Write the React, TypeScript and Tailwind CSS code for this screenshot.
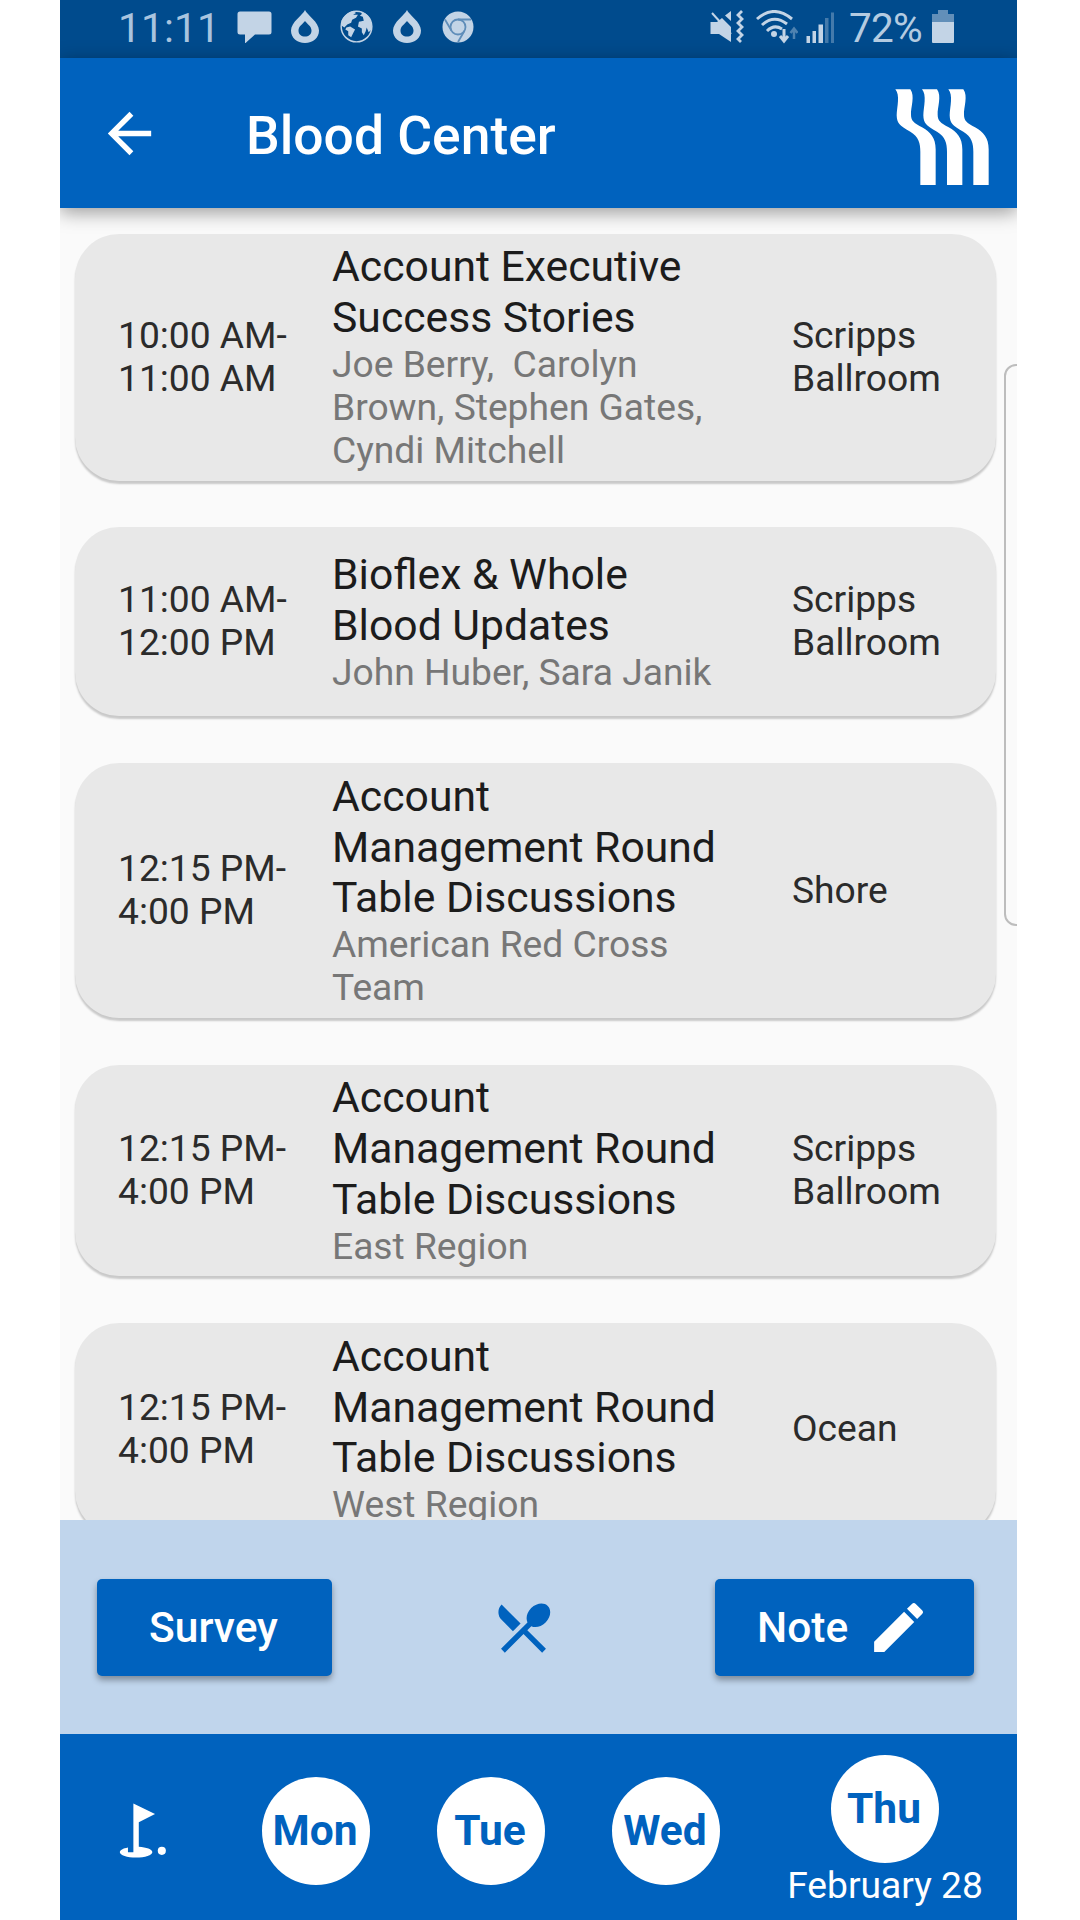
import { MdArrowBack, MdEdit, MdGolfCourse, MdLocalDining } from 'react-icons/md'

type Session = {
  time: string
  title: string
  speakers: string
  room: string
}

const sessions: Session[] = [
  {
    time: '10:00 AM-\n11:00 AM',
    title: 'Account Executive\nSuccess Stories',
    speakers: 'Joe Berry,  Carolyn\nBrown, Stephen Gates,\nCyndi Mitchell',
    room: 'Scripps\nBallroom',
  },
  {
    time: '11:00 AM-\n12:00 PM',
    title: 'Bioflex & Whole\nBlood Updates',
    speakers: 'John Huber, Sara Janik',
    room: 'Scripps\nBallroom',
  },
  {
    time: '12:15 PM-\n4:00 PM',
    title: 'Account\nManagement Round\nTable Discussions',
    speakers: 'American Red Cross\nTeam',
    room: 'Shore',
  },
  {
    time: '12:15 PM-\n4:00 PM',
    title: 'Account\nManagement Round\nTable Discussions',
    speakers: 'East Region',
    room: 'Scripps\nBallroom',
  },
  {
    time: '12:15 PM-\n4:00 PM',
    title: 'Account\nManagement Round\nTable Discussions',
    speakers: 'West Region',
    room: 'Ocean',
  },
]

function DropIcon({ className }: { className: string }) {
  return (
    <svg viewBox="0 0 28 33" className={className} fill="currentColor">
      <path
        fillRule="evenodd"
        d="M14 0C16 5 28 12 28 20.5C28 28 22 33 14 33S0 28 0 20.5C0 12 12 5 14 0ZM14 11C12 14 7.500 16 7.500 20.500C7.500 24.500 10.500 26.500 14 26.500S20.500 24.500 20.500 20.500C20.500 16 16 14 14 11Z"
      />
    </svg>
  )
}

function StatusBar() {
  return (
    <div className="flex h-[58px] shrink-0 items-start bg-[#004b8d] pt-[10px] text-[#c3d4e6]">
      <span className="ml-[58px] w-[119px] text-[41px] leading-[37px] text-[#a9c4df]">11:11</span>
      <svg viewBox="0 0 36 33" className="h-[33px] w-[36px]" fill="currentColor">
        <path d="M3 1.500H32Q34.500 1.500 34.500 4V22Q34.500 24.500 32 24.500H18L8 33.500V24.500H3Q0.500 24.500 0.500 22V4Q0.500 1.500 3 1.500Z" />
      </svg>
      <DropIcon className="ml-[18px] h-[33px] w-[28px]" />
      <svg viewBox="0 0 35 35" className="ml-[20px] h-[34px] w-[35px]" fill="currentColor">
        <circle cx="17.500" cy="17" r="15.800" fill="none" stroke="currentColor" strokeWidth="1.500" />
        <path d="M2 11Q6 3 14 1L17 3L14 5L19 5L17 8L13 10L12 13L8 15L5 18L2 16Z" />
        <path d="M7 18L11 17L16 20L14 24L12 28L9 26L9 22L6 20Z" />
        <path d="M22 1.500Q27 3 30 7L33 13V20L30 23L28 18L27 22L25 26L23 23V19L19 17L20 12L25 11L24 7L21 6L23 4Z" />
      </svg>
      <DropIcon className="ml-[19px] h-[33px] w-[28px]" />
      <svg viewBox="0 0 32 32" className="ml-[21px] mt-px h-[32px] w-[32px]">
        <circle cx="16" cy="16" r="15.500" fill="currentColor" />
        <g fill="none" stroke="#5f8db9" strokeWidth="1.800">
          <circle cx="16" cy="16" r="7.500" />
          <path d="M16 8.500H29M9.500 19.700L3 8.500M22.500 19.700L16 31" />
        </g>
      </svg>
      <svg viewBox="0 0 34 34" className="ml-[236px] h-[34px] w-[34px]" fill="currentColor">
        <path d="M0.500 12H7L12 8L21 17V32L9 24H0.500ZM15 5.500L21 1V11Z" />
        <path d="M2 3L21 24" stroke="currentColor" strokeWidth="2" />
        <path d="M32 1L28 5L32 9L28 13L32 17L28 21L32 25L28 29L31 32" fill="none" stroke="currentColor" strokeWidth="2.800" />
      </svg>
      <svg viewBox="0 0 42 34" className="ml-[12px] h-[34px] w-[42px]" fill="none" stroke="currentColor">
        <path d="M1 9Q18 -6 36 9M6 15Q18 4 31 14M11 21Q18 14 26 19" strokeWidth="3" />
        <circle cx="18" cy="24" r="3" fill="currentColor" stroke="none" />
        <path d="M28 19V31M24 26L28 31L32 26" strokeWidth="3" />
        <path d="M38 29V18M34.500 23L38 18.500L41.500 23" strokeWidth="2.500" opacity=".4" />
      </svg>
      <svg viewBox="0 0 29 34" className="ml-[8px] h-[34px] w-[29px]" fill="currentColor">
        <path d="M0.500 26H4V33H0.500ZM6.500 21H10V33H6.500ZM12.500 14.500H17V33H12.500Z" />
        <path d="M19 8H22.500V33H19ZM25 2.500H28V33H25Z" opacity=".35" />
      </svg>
      <span className="ml-[14px] w-[83px] text-[40.5px] leading-[37px] tracking-[-0.8px] text-[#b4cbe1]">72%</span>
      <svg viewBox="0 0 22 33" className="h-[33px] w-[22px]" fill="currentColor">
        <path d="M6 0H16V4H22V12H0V4H6Z" opacity=".5" />
        <path d="M0 12H22V32Q22 33 21 33H1Q0 33 0 32Z" />
      </svg>
    </div>
  )
}

function Logo() {
  const stripe =
    'M645 270C660 288 650 322 649 348C650 372 656 378 690 397C715 413 720 430 720 458V557H766V450C766 415 750 398 725 384C700 370 692 364 692 346C691 325 705 290 690 270Z'
  return (
    <svg viewBox="644 269 282 291" className="mt-[9px] h-[97px] w-[94px]" fill="white">
      <path d={stripe} />
      <path d={stripe} transform="translate(80 0)" />
      <path d={stripe} transform="translate(159 0)" />
    </svg>
  )
}

function SessionCard({ session }: { session: Session }) {
  return (
    <div className="grid min-h-[189px] shrink-0 grid-cols-[214px_460px_1fr] items-center whitespace-pre rounded-[44px] bg-[#e8e8e8] pt-[7.6px] pb-[8.5px] pl-[43px] text-[37.2px] leading-[43px] text-[#2b2b2b] shadow-[0_3px_2px_rgba(0,0,0,0.2)]">
      <div>{session.time}</div>
      <div>
        <div className="text-[42.7px] leading-[50.9px] text-[#1c1c1c]">{session.title}</div>
        <div className="text-[#777]">{session.speakers}</div>
      </div>
      <div>{session.room}</div>
    </div>
  )
}

function DayButton({ day }: { day: string }) {
  return (
    <button
      type="button"
      className="flex size-[108px] shrink-0 items-center justify-center rounded-full bg-white pr-[2px] text-[42.5px] font-bold text-[#0062be]"
    >
      {day}
    </button>
  )
}

export default function App() {
  return (
    <div className="h-[1920px] w-[1080px] overflow-hidden bg-white font-['Roboto',sans-serif]">
      <div className="relative ml-[60px] flex h-full w-[957px] flex-col overflow-hidden bg-[#fafafa]">
        <StatusBar />
        <header className="relative z-10 flex h-[150px] shrink-0 items-center bg-[#0062be] pr-[28px] pl-[37px] text-white shadow-[0_4px_18px_rgba(0,0,0,0.4)]">
          <MdArrowBack className="size-[65px]" />
          <h1 className="ml-[84px] flex-1 pt-[6px] text-[53.4px] font-medium">Blood Center</h1>
          <Logo />
        </header>

        <main className="flex h-[1312px] shrink-0 flex-col gap-[46.7px] overflow-hidden pt-[25.8px] pr-[21px] pl-[15px]">
          {sessions.map((session, i) => (
            <SessionCard key={i} session={session} />
          ))}
        </main>

        <div className="flex h-[214px] shrink-0 items-center justify-between bg-[#c0d5ec] pr-[43px] pl-[37px]">
          <button
            type="button"
            className="h-[97px] w-[235px] rounded-[5px] bg-[#0062be] pt-[2px] pr-[2px] text-[42.5px] font-medium text-white shadow-[0_4px_6px_rgba(0,0,0,0.35)]"
          >
            Survey
          </button>
          <MdLocalDining className="size-[65px] text-[#0062be]" />
          <button
            type="button"
            className="flex h-[97px] w-[259px] items-center rounded-[5px] bg-[#0062be] pl-[42px] text-[42.5px] font-medium text-white shadow-[0_4px_6px_rgba(0,0,0,0.35)]"
          >
            <span className="pt-[2px]">Note</span>
            <MdEdit className="ml-[18px] size-[65px]" />
          </button>
        </div>

        <nav className="flex h-[186px] shrink-0 bg-[#0062be] pt-[43px] pl-[49px] text-white">
          <MdGolfCourse className="mt-[21px] mr-[88px] size-[65px]" />
          <div className="flex gap-[67px]">
            <DayButton day="Mon" />
            <DayButton day="Tue" />
            <DayButton day="Wed" />
          </div>
          <div className="-mt-[22px] ml-[54px] flex w-[222px] flex-col items-center">
            <DayButton day="Thu" />
            <span className="text-[37.2px] leading-[45px]">February 28</span>
          </div>
        </nav>

        {/* edge panel handle */}
        <div className="absolute top-[364px] -right-[12px] h-[562px] w-[25px] rounded-[12px] border-2 border-[#bdbdbd] bg-[#fafafa]" />
      </div>
    </div>
  )
}
